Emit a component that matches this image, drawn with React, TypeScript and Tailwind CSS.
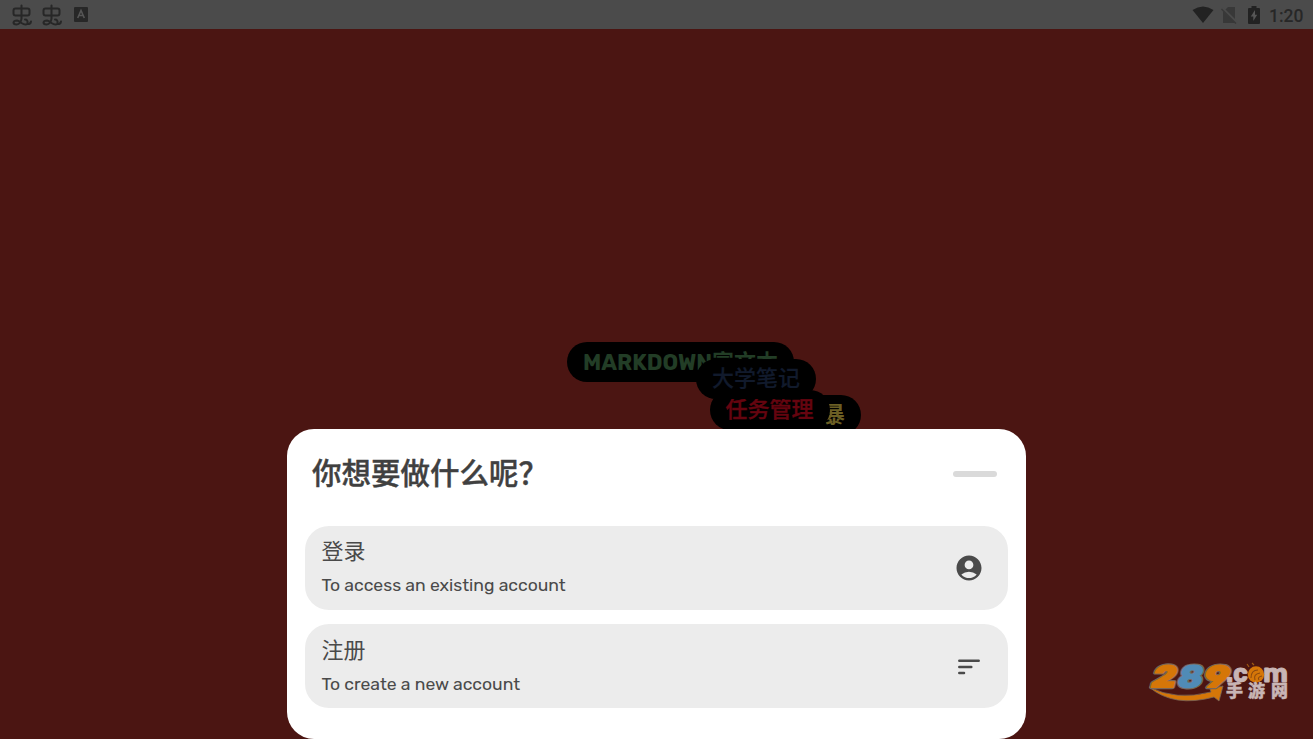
import React from 'react';
import { MdAccountCircle } from 'react-icons/md';

interface Tag {
  label: string;
  className: string;
}

interface Option {
  title: string;
  description: string;
  icon: React.ReactNode;
}

// Later tags are stacked over earlier ones
const tags: Tag[] = [
  { label: '头脑风暴', className: 'left-[741px] top-[395px] w-[120px] text-[#6b5f24] font-bold' },
  { label: 'MARKDOWN富文本', className: 'left-[567px] top-[342px] w-[227px] pt-[2px] text-[#223d26] font-bold' },
  { label: '任务管理', className: 'left-[709.5px] top-[390px] w-[120px] text-[#65040f] font-medium [-webkit-text-stroke:0.4px_#65040f]' },
  { label: '大学笔记', className: 'left-[696px] top-[359px] w-[120px] text-[#111a2c] font-medium [-webkit-text-stroke:0.2px_#111a2c]' },
];

const options: Option[] = [
  {
    title: '登录',
    description: 'To access an existing account',
    icon: <MdAccountCircle className="h-[30px] w-[30px]" />,
  },
  {
    title: '注册',
    description: 'To create a new account',
    icon: (
      <svg viewBox="0 0 30 30" className="h-[30px] w-[30px]" fill="none" stroke="currentColor" strokeWidth="2.5" strokeLinecap="round">
        <path d="M5.3 8.7H24.7M5.3 14.9H17.3M5.3 21.1H10" />
      </svg>
    ),
  },
];

const BugIcon = () => (
  <svg viewBox="0 0 22 24" className="h-6 w-[22px]" fill="none" stroke="#272727" strokeWidth="2" strokeLinecap="round" strokeLinejoin="round">
    <path d="M10.5 2.5V15.5Q10 21 5.5 21.5Q2.5 21.5 2.5 19.5Q3 17.5 6 17.5Q8.5 18 10.5 20Q14 22.5 16.5 21Q19.5 21.5 20 18.5M4.5 5.5H16.5Q18.5 5.5 18.5 7.5V10.5Q18.5 12.5 16.5 12.5H4.5Q2.5 12.5 2.5 10.5V7.5Q2.5 5.5 4.5 5.5Z" />
    <path d="M14 16.5Q17 16.5 16.5 20.5" />
  </svg>
);

const StatusBar = () => (
  <div className="flex h-[29px] items-center justify-between bg-[#4b4b4b] pl-[11px] pr-[10px] text-[#272727]">
    <div className="flex items-center">
      <BugIcon />
      <span className="w-2" />
      <BugIcon />
      <svg viewBox="0 0 14 15" className="ml-[11px] h-[15px] w-[14px]">
        <rect width="14" height="15" rx="1" fill="#272727" />
        <path d="M3.7 11L7 3.5L10.3 11M5 8.5H9" fill="none" stroke="#555" strokeWidth="1.6" />
      </svg>
    </div>
    <div className="flex items-center">
      <svg viewBox="0 0 22 18" className="h-[18px] w-[22px]">
        <path d="M0.5 4Q11 -3 21.5 4L11 17Z" fill="#222" />
      </svg>
      <svg viewBox="0 0 17 18" className="ml-[7px] h-[18px] w-[17px]">
        <path d="M7 1H14V17H2V6Z" fill="#383838" />
        <path d="M1 2L16 17" stroke="#4b4b4b" strokeWidth="2.8" />
        <path d="M0.5 3L15 17.5" stroke="#383838" strokeWidth="1.5" />
      </svg>
      <svg viewBox="0 0 12 18" className="ml-[10px] h-[18px] w-3">
        <path d="M3.5 0H8.5V2H11Q12 2 12 3V17Q12 18 11 18H1Q0 18 0 17V3Q0 2 1 2H3.5Z" fill="#222" />
        <path d="M7 4L2.8 10.5H5.3V15L9.2 8.7H7Z" fill="#565656" />
      </svg>
      <span className="ml-[9px] mt-[2px] w-[34px] text-right font-[Roboto] text-[17.5px] font-medium leading-6">1:20</span>
    </div>
  </div>
);

const SiteLogo = () => (
  <svg viewBox="0 0 144 46" className="absolute left-[1147px] top-[658px] h-[46px] w-36">
    <path d="M2 29Q29 43 64 34L63 31L76 28L72 43L67 39Q27 50 2 29Z" fill="#d57608" stroke="#796659" strokeWidth="0.8" />
    <g
      transform="translate(7.5 0) skewX(-14)"
      fontFamily="Rubik, 'Liberation Sans', sans-serif"
      fontWeight="900"
      fontSize="33"
      stroke="#796659"
      strokeWidth="2.4"
      paintOrder="stroke"
      strokeLinejoin="round"
    >
      <text x="2" y="29.5" textLength="26" lengthAdjust="spacingAndGlyphs" fill="#d57608">2</text>
      <text x="54" y="29.5" textLength="26" lengthAdjust="spacingAndGlyphs" fill="#d57608">9</text>
      <text x="28" y="29.5" textLength="26" lengthAdjust="spacingAndGlyphs" fill="#508bb6">8</text>
    </g>
    <g fontFamily="Rubik, 'Liberation Sans', sans-serif" fontWeight="bold" fontSize="27" fill="#c8b5b5" stroke="#c8b5b5" strokeWidth="0.9">
      <text x="79" y="24" textLength="22" lengthAdjust="spacingAndGlyphs">.c</text>
      <text x="116" y="24" textLength="25" lengthAdjust="spacingAndGlyphs">m</text>
    </g>
    <circle cx="109" cy="16.5" r="8.2" fill="#d57608" />
    <path d="M104 20Q104 12 111 12M108 22Q106 16 113 15M112 22Q110 19 115 18" fill="none" stroke="#8c490f" strokeWidth="1.1" />
    <path d="M102 9L100 6M107 7L105 5" stroke="#a05a10" strokeWidth="1.2" />
    <text y="39" x="79 101 124" fontFamily="'Noto Sans CJK SC', sans-serif" fontWeight="900" fontSize="17" fill="#c8b5b5" stroke="#c8b5b5" strokeWidth="0.4">手游网</text>
  </svg>
);

const ActionSheet = () => (
  <div className="relative z-10 mt-auto h-[310px] w-[739px] self-center rounded-[27px] bg-white px-[18px] text-[#404040]">
    <div className="flex h-[96.5px] items-center justify-between pb-[6px] pl-[7px] pr-[11px]">
      <h2 className="pb-[2px] text-[29.5px] font-medium leading-none [-webkit-text-stroke:0.4px_#404040]">你想要做什么呢？</h2>
      <div className="h-[6px] w-11 rounded-full bg-[#dadada]" />
    </div>
    <div className="flex flex-col gap-[14.5px]">
      {options.map((option) => (
        <button
          key={option.title}
          className="flex h-[84px] items-center justify-between rounded-[24px] bg-[#ececec] pl-[16.5px] pr-6 pt-px text-left text-[#4a4a4a]"
        >
          <div>
            <div className="text-[22px] leading-[34px]">{option.title}</div>
            <div className="text-[17.6px] leading-[32px] tracking-[-0.03px]">{option.description}</div>
          </div>
          {option.icon}
        </button>
      ))}
    </div>
  </div>
);

const App: React.FC = () => (
  <div className="relative flex h-[739px] w-[1313px] flex-col overflow-hidden bg-[#4b1512] font-['Rubik','Inter','Noto_Sans_CJK_SC',sans-serif]">
    <StatusBar />
    {tags.map((tag) => (
      <div
        key={tag.label}
        className={`absolute flex h-10 items-center whitespace-nowrap rounded-full bg-black px-4 text-[22px] leading-none ${tag.className}`}
      >
        {tag.label}
      </div>
    ))}
    <ActionSheet />
    <SiteLogo />
  </div>
);

export default App;
